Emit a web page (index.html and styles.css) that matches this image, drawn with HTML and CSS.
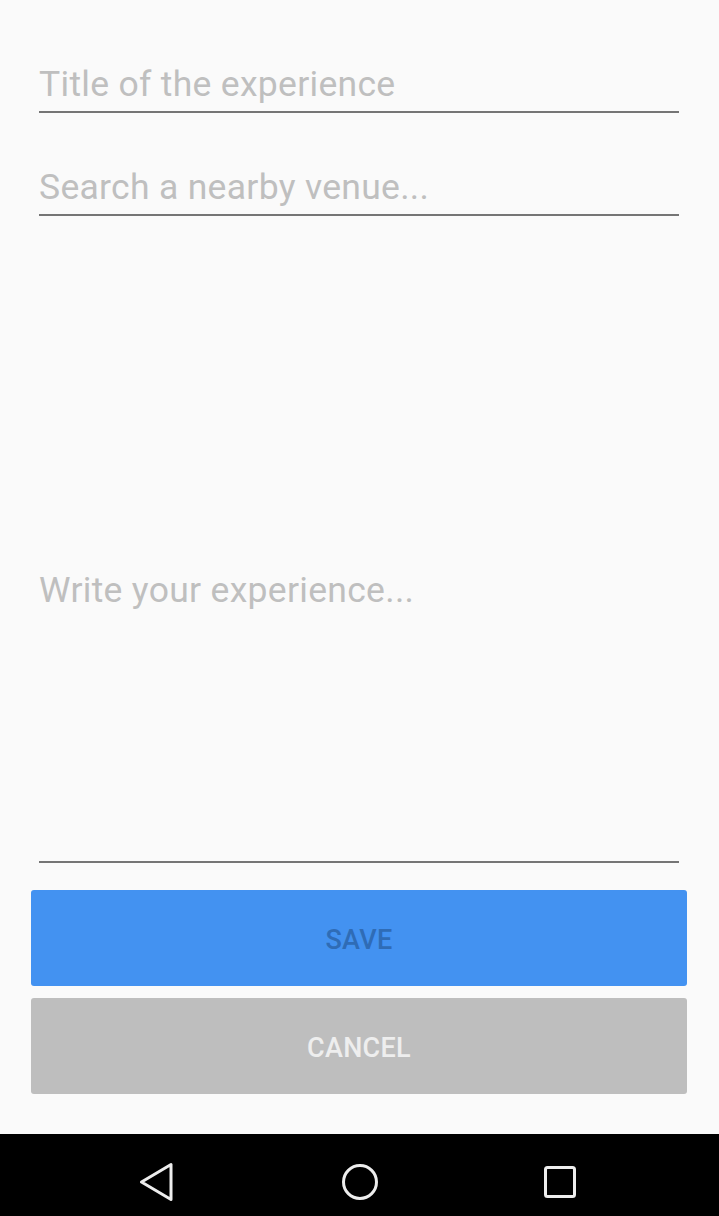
FILE: index.html
```html
<!DOCTYPE html>
<html lang="en">
<head>
<meta charset="utf-8">
<title>New experience</title>
<link rel="stylesheet" href="styles.css">
</head>
<body>
<div class="screen">
  <main class="form">
    <div class="field field-title"><span class="placeholder">Title of the experience</span></div>
    <div class="field field-venue"><span class="placeholder">Search a nearby venue...</span></div>
    <div class="field field-body"><span class="placeholder">Write your experience...</span></div>
    <div class="actions">
      <button class="btn btn-save" type="button">SAVE</button>
      <button class="btn btn-cancel" type="button">CANCEL</button>
    </div>
  </main>
  <nav class="navbar">
    <div class="nav-cell">
      <svg width="40" height="40" viewBox="0 0 40 40"><path d="M31 2.5 L31 37.5 L1.5 20 Z" fill="none" stroke="#ededed" stroke-width="3" stroke-linejoin="round"/></svg>
    </div>
    <div class="nav-cell">
      <svg width="40" height="40" viewBox="0 0 40 40"><circle cx="20" cy="20" r="16.5" fill="none" stroke="#ededed" stroke-width="3"/></svg>
    </div>
    <div class="nav-cell">
      <svg width="40" height="40" viewBox="0 0 40 40"><rect x="5.5" y="5.5" width="29" height="29" rx="2" fill="none" stroke="#ededed" stroke-width="3"/></svg>
    </div>
  </nav>
</div>
</body>
</html>
```

FILE: styles.css
```css
html, body {
  margin: 0;
  padding: 0;
  background: #fafafa;
}
body {
  font-family: Roboto, "Noto Sans", sans-serif;
}
.screen {
  display: flex;
  flex-direction: column;
  min-height: 100vh;
}
.form {
  flex: 1;
  display: flex;
  flex-direction: column;
  padding: 0 32px 0 31px;
}
.field {
  margin: 0 8px;
  border-bottom: 2px solid #757575;
  font-size: 35.5px;
  letter-spacing: 0.3px;
  line-height: 40px;
  padding-bottom: 7px;
  color: #bfbfbf;
}
.field-title {
  margin-top: 64px;
}
.field-venue {
  margin-top: 54px;
}
.field-body {
  margin-top: 354px;
  padding-bottom: 251px;
}
.actions {
  display: flex;
  flex-direction: column;
  gap: 12px;
  margin-top: 27px;
}
.btn {
  height: 96px;
  border: none;
  border-radius: 3px;
  font-family: Roboto, "Noto Sans", sans-serif;
  font-weight: 500;
  font-size: 27px;
  letter-spacing: 0.3px;
  padding: 4px 0 0;
}
.btn-save {
  background: #4392f1;
  color: #2f6cb6;
}
.btn-cancel {
  background: #bebebe;
  color: #eeeeee;
}
.navbar {
  height: 82px;
  box-sizing: border-box;
  padding-top: 14px;
  background: #000;
  display: flex;
  justify-content: center;
  align-items: center;
}
.nav-cell {
  width: 200px;
  display: flex;
  justify-content: center;
  align-items: center;
}
.nav-cell svg {
  display: block;
}
```
